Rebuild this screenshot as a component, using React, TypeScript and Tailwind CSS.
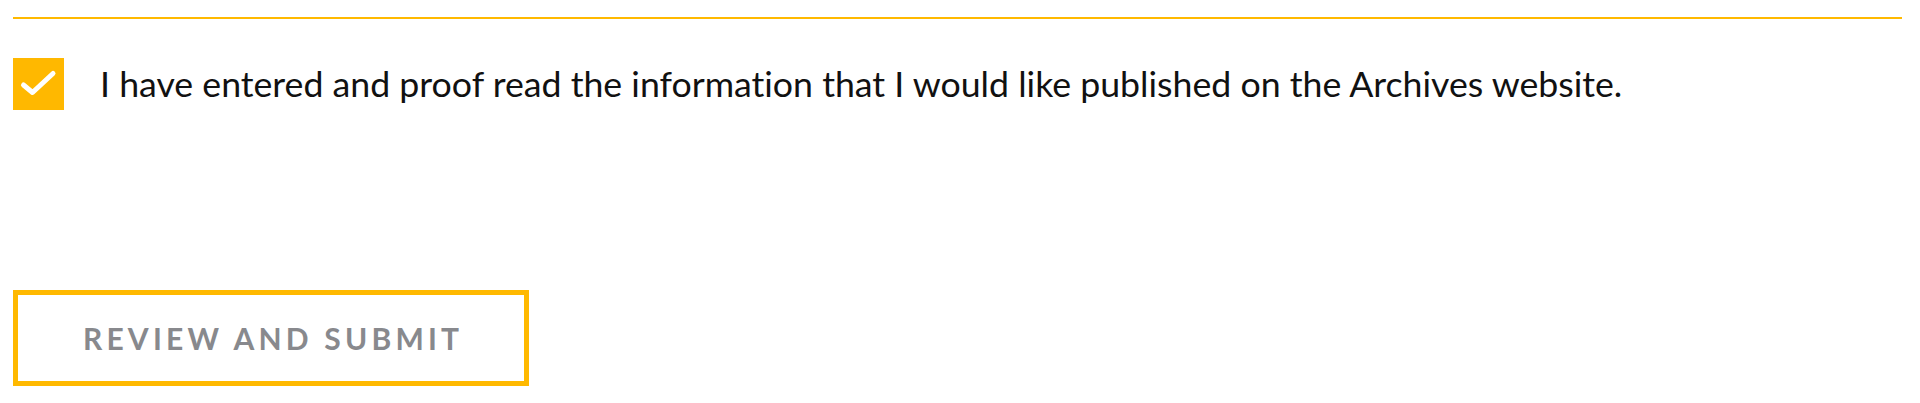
import { useState } from 'react';

function App() {
  const [checked, setChecked] = useState(true);

  return (
    <div className="w-[1920px] h-[403px] bg-white px-[13px] pt-[17px] font-['Lato','Liberation_Sans',sans-serif]">
      {/* Divider */}
      <div className="h-[2px] w-[1889px] bg-[#ffb900]" />

      {/* Confirmation checkbox */}
      <label className="mt-[39px] flex items-center gap-[36px] cursor-pointer">
        <button
          type="button"
          onClick={() => setChecked(!checked)}
          className="flex h-[52px] w-[51px] shrink-0 bg-[#ffb800]"
        >
          {checked && (
            <svg width="51" height="52" viewBox="0 0 51 52" fill="none">
              <path
                d="M10.5 27 L19.5 34.5 L40 15.5"
                stroke="white"
                strokeWidth="5"
                strokeLinecap="round"
                strokeLinejoin="round"
              />
            </svg>
          )}
        </button>
        <span className="text-[35.7px] leading-none text-[#111111] [font-variant-ligatures:none]">
          I have entered and proof read the information that I would like published on the Archives website.
        </span>
      </label>

      {/* Submit */}
      <button
        type="button"
        className="mt-[180px] flex h-[96px] w-[516px] items-center justify-center border-[5px] border-[#ffb900] bg-white"
      >
        <span className="pl-[0.14em] text-[30px] font-bold uppercase tracking-[0.14em] text-[#88898d]">
          Review and submit
        </span>
      </button>
    </div>
  );
}

export default App;
